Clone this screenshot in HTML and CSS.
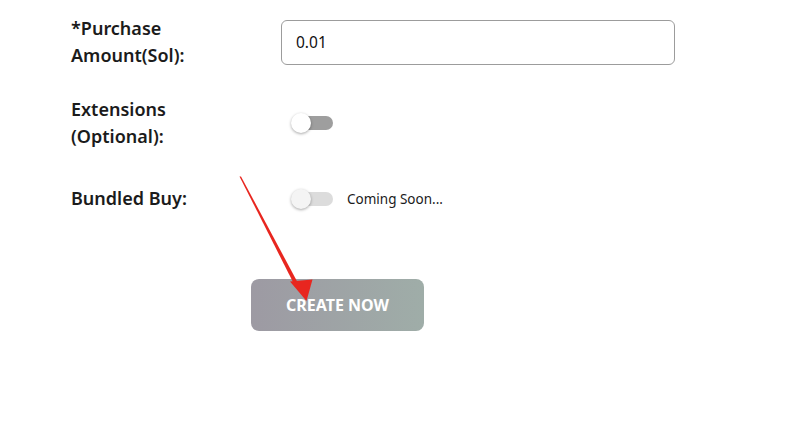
FILE: index.html
```html
<!DOCTYPE html>
<html>
<head>
<meta charset="utf-8">
<link rel="stylesheet" href="styles.css">
</head>
<body>
<div class="page">
  <form class="form">
    <div class="row row-amount">
      <div class="label">*Purchase Amount(Sol):</div>
      <div class="field"><input class="input" type="text" value="0.01"></div>
    </div>
    <div class="row row-ext">
      <div class="label">Extensions (Optional):</div>
      <div class="field"><span class="toggle"><span class="thumb"></span></span></div>
    </div>
    <div class="row row-bundle">
      <div class="label">Bundled Buy:</div>
      <div class="field"><span class="toggle toggle-off"><span class="thumb"></span></span><span class="soon">Coming Soon...</span></div>
    </div>
    <div class="actions">
      <button type="button" class="btn">CREATE NOW</button>
    </div>
  </form>
  <svg class="arrow" width="789" height="424" viewBox="0 0 789 424">
    <polygon points="239.5,176.5 241,176.5 299,285 295.5,287" fill="#e8261f"/>
    <polygon points="290,281.5 312.5,279.5 306.5,301" fill="#e8261f"/>
  </svg>
</div>
</body>
</html>
```
FILE: styles.css
```css
html, body {
  margin: 0;
  padding: 0;
  background: #fff;
}
.page {
  position: relative;
  width: 789px;
  height: 424px;
  overflow: hidden;
  font-family: "Noto Sans", "Lato", sans-serif;
  color: #1b1b1b;
}
.form {
  padding: 15px 0 0 71px;
  display: flex;
  flex-direction: column;
}
.row {
  display: grid;
  grid-template-columns: 210px 394px;
  align-items: center;
}
.row-amount { margin-bottom: 27px; }
.row-ext { margin-bottom: 35px; }
.label {
  width: 130px;
  font-size: 18px;
  line-height: 27px;
  font-weight: 600;
}
.field {
  display: flex;
  align-items: center;
}
.input {
  box-sizing: border-box;
  width: 394px;
  height: 45px;
  border: 1px solid #9c9c9c;
  border-radius: 6px;
  padding: 0 14px;
  font-family: inherit;
  font-size: 15.5px;
  color: #111;
  outline: none;
}
.toggle {
  position: relative;
  display: inline-block;
  width: 42px;
  height: 20px;
  margin-left: 10px;
}
.toggle::before {
  content: "";
  position: absolute;
  left: 6px;
  right: 0;
  top: 3px;
  height: 14px;
  border-radius: 7px;
  background: #9e9e9e;
}
.toggle-off::before { background: #dcdcdc; }
.thumb {
  position: absolute;
  left: 0;
  top: 0;
  width: 20px;
  height: 20px;
  border-radius: 50%;
  background: #fff;
  box-shadow: 0 1px 3px rgba(0,0,0,0.35);
}
.toggle-off .thumb { background: #f4f4f4; }
.soon {
  margin-left: 14px;
  font-size: 13.5px;
  color: #1b1b1b;
}
.actions {
  padding: 67px 0 0 180px;
}
.btn {
  width: 173px;
  height: 52px;
  border: none;
  border-radius: 8px;
  background: linear-gradient(90deg, #9d9aa3 0%, #9fada8 100%);
  color: #fff;
  font-family: inherit;
  font-size: 16px;
  font-weight: 700;
  cursor: pointer;
}
.arrow {
  position: absolute;
  left: 0;
  top: 0;
  pointer-events: none;
}
```
